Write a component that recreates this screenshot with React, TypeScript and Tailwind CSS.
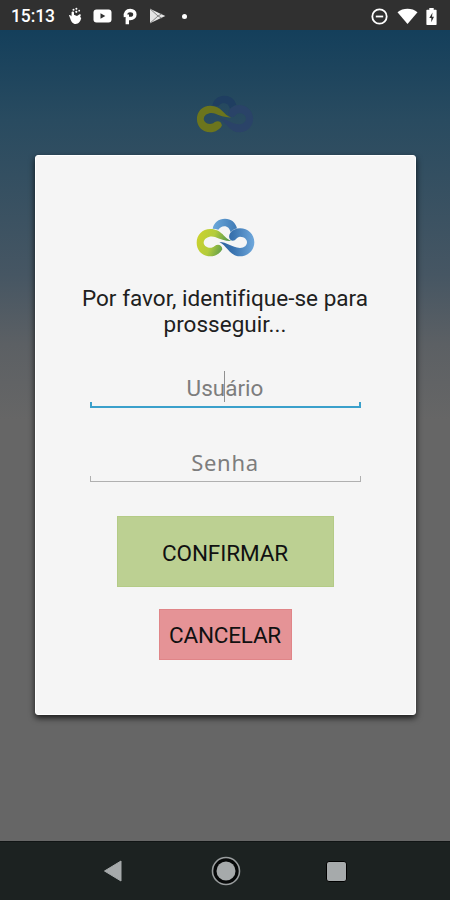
function CloudLogo({ className, dimmed }: { className?: string; dimmed?: boolean }) {
  const leaf = dimmed ? '#747a16' : 'url(#leaf)';
  const sky = dimmed ? '#2b4369' : 'url(#sky)';
  const arch = dimmed ? '#1f3d62' : 'url(#arch)';

  return (
    <svg className={className} viewBox="33 38 177 117" fill="none">
      <defs>
        <linearGradient id="leaf" x1="35" y1="70" x2="140" y2="110" gradientUnits="userSpaceOnUse">
          <stop offset="0" stopColor="#d0d32a" />
          <stop offset="0.5" stopColor="#b3cc3c" />
          <stop offset="1" stopColor="#3f8a52" />
        </linearGradient>
        <linearGradient id="sky" x1="103" y1="0" x2="208" y2="0" gradientUnits="userSpaceOnUse">
          <stop offset="0" stopColor="#2c5f9e" />
          <stop offset="0.4" stopColor="#3a74b0" />
          <stop offset="1" stopColor="#6fa8dc" />
        </linearGradient>
        <linearGradient id="arch" x1="84" y1="0" x2="156" y2="0" gradientUnits="userSpaceOnUse">
          <stop offset="0" stopColor="#6ba8da" />
          <stop offset="1" stopColor="#3f7ab5" />
        </linearGradient>
      </defs>
      <path d="M83 70C86 52 101 40 120 40c18 0 32 11 36 29-8 2-14 6-19 12-3-11-9-18-19-18-8 0-13 4-18 10-5-2-11-3-17-3z" fill={arch} />
      <path d="M103 110c22 0 37 16 62 18 28 0 28-34 0-34-10 0-12 12-22 12-11-1-14-14-7-24 7-8 17-13 29-13 24 0 43 18 43 42s-19 42-43 42c-30 0-39-32-62-43z" fill={sky} />
      <path d="M140 107C117 100 111 71 76 71c-24 0-41 18-41 41s17 41 41 41c16 0 30-9 36-21-1-13-13-17-23-10-8 9-30 7-33-9 0-17 21-23 34-18 16 6 32 13 50 12z" fill={leaf} />
    </svg>
  );
}

function StatusBar() {
  return (
    <header className="flex h-[30px] shrink-0 items-center bg-[#303030] pl-[11px] pr-[13px] pt-[2px] text-white">
      <span className="w-[57px] pt-px text-[17.5px] font-medium leading-none tracking-[-0.1px]">15:13</span>
      <svg className="h-[18px] w-[15px]" viewBox="0 0 15 18" fill="currentColor">
        <path d="M1 8.200c1-.8 1.800.2 2.700 1.400L4 7l5 2 2.200-1.500c1-.7 2 .2 1.400 1.200l-.5 1.200c1.300.4 1.300 1.400.8 2.200C12.400 14.500 10.800 17 7.600 17 4.700 17 3.200 14.500 2.400 12z" />
        <rect x="3.600" y="4.400" width="2.400" height="6" rx="1.200" />
        <circle cx="5.500" cy="2.800" r="1" />
        <circle cx="8.400" cy="1.700" r="1" />
        <circle cx="8.300" cy="4.800" r="1.100" />
        <circle cx="11.200" cy="3.700" r="0.9" />
      </svg>
      <svg className="ml-[10px] h-[14px] w-[19px]" viewBox="0 0 19 14">
        <rect x="0.5" y="0.5" width="18" height="13" rx="3" fill="currentColor" />
        <path d="M7.500 4.200v5.600L12.300 7z" fill="#303030" />
      </svg>
      <svg className="ml-[11px] h-[17px] w-[14px]" viewBox="0 0 14 17" fill="none" stroke="currentColor" strokeWidth="3.400">
        <path d="M4.300 16.200V6.500M2.400 9C1.800 4.500 4 2.500 7.200 2.500c3 0 4.700 1.600 4.700 3.900s-1.700 4.100-4.700 4.100H4.800" />
      </svg>
      <svg className="ml-[12px] h-[16px] w-[17px]" viewBox="0 0 17 16">
        <path d="M1 .8 16.300 8 1 15.200z" fill="#e4e4e4" />
        <path d="M1 .8 9 8l-8 7.200M9 8l3.500-2M9 8l3.500 2" fill="none" stroke="#777777" strokeWidth="0.9" />
      </svg>
      <span className="ml-[16px] h-[5px] w-[5px] rounded-full bg-white" />

      <svg className="ml-auto h-[17px] w-[17px]" viewBox="0 0 17 17" fill="none" stroke="currentColor" strokeWidth="1.800">
        <circle cx="8.500" cy="8.500" r="7.200" />
        <path d="M4.800 8.500h7.400" />
      </svg>
      <svg className="ml-[9px] h-[16px] w-[21px]" viewBox="0 0 21 16" fill="currentColor">
        <path d="M.5 4.200C6-.4 15-.4 20.500 4.200L10.500 16z" />
      </svg>
      <svg className="ml-[8px] h-[17px] w-[11px]" viewBox="0 0 11 17">
        <path d="M3.300 0h4.400v1.700H10q.6 0 .6.6v14q0 .7-.6.7H1q-.6 0-.6-.7v-14q0-.6.6-.6h2.300z" fill="currentColor" />
        <path d="M6.500 4.500 3.300 10h2v4.300L8 8.700H6z" fill="#303030" />
      </svg>
    </header>
  );
}

function NavBar() {
  return (
    <nav className="flex h-[59px] shrink-0 items-center justify-between border-t border-[#111515] bg-[#1c2221] pl-[103px] pr-[103px]">
      <svg className="h-[22px] w-[20px]" viewBox="0 0 20 22">
        <path d="M1.500 11 18 1v20z" fill="#a6aaab" stroke="#a6aaab" strokeLinejoin="round" />
      </svg>
      <svg className="ml-[2px] h-[30px] w-[30px]" viewBox="0 0 30 30">
        <circle cx="15" cy="15" r="13.500" fill="#070909" stroke="#999d9e" strokeWidth="1.600" />
        <circle cx="15" cy="15" r="9.500" fill="#a6aaab" />
      </svg>
      <span className="h-[21px] w-[21px] rounded-[3px] border border-black bg-[#a6aaab]" />
    </nav>
  );
}

function UnderlineField({ name, type, placeholder, active }: { name: string; type: string; placeholder: string; active?: boolean }) {
  return (
    <div className="relative w-[271px]">
      <input
        name={name}
        type={type}
        placeholder={placeholder}
        className={
          active
            ? 'block h-[36px] w-full bg-transparent pt-[8px] text-center text-[22.5px] outline-none placeholder:text-[#7d7d7d]'
            : 'block h-[36px] w-full bg-transparent pt-[7px] text-center font-["Noto_Sans",sans-serif] text-[22px] tracking-[0.7px] outline-none placeholder:text-[#7d7d7d]'
        }
      />
      {/* Line with raised ends */}
      <div className={active ? 'h-[6px] border-x-2 border-b-2 border-[#3aa0cb]' : 'h-[6px] border-x border-b-[1.5px] border-[#b0b0b0]'} />
      {active && <span className="absolute left-[134px] top-[5px] h-[31px] w-px bg-[#909090]" />}
    </div>
  );
}

export default function App() {
  return (
    <div className="flex h-[900px] w-[450px] flex-col overflow-hidden font-[Roboto,sans-serif]">
      <StatusBar />
      <main className="relative flex h-[811px] shrink-0 flex-col items-center bg-[linear-gradient(#143f5b_0px,#294b60_90px,#465663_245px,#5c6064_315px,#666666_390px)]">
        <div className="h-[125px] shrink-0 pt-[65px]">
          <CloudLogo className="h-[38px] w-[58px] opacity-90" dimmed />
        </div>

        {/* Login dialog */}
        <form className="flex h-[560px] w-[381px] shrink-0 flex-col items-center rounded-[3px] border border-white bg-[#f5f5f5] shadow-[0_3px_6px_0px_rgba(0,0,0,0.75)]">
          <CloudLogo className="mt-[62px] h-[39px] w-[59px]" />
          <p className="mt-[28px] text-center text-[22.5px] leading-[26px] tracking-[0.03px] text-[#202020]">
            Por favor, identifique-se para
            <br />
            prosseguir...
          </p>
          <div className="mt-[29px] flex flex-col gap-[32px]">
            <UnderlineField name="usuario" type="text" placeholder="Usuário" active />
            <UnderlineField name="senha" type="password" placeholder="Senha" />
          </div>
          <button type="button" className="mt-[34px] h-[71px] w-[217px] shrink-0 border border-[#b4cb86] bg-[#bcd092] pt-[4px] text-[22.5px] tracking-[-0.1px] text-[#111111]">
            CONFIRMAR
          </button>
          <button type="button" className="mt-[22px] h-[51px] w-[133px] shrink-0 border border-[#e08588] bg-[#e59396] pt-[3px] text-[22.5px] tracking-[-0.2px] text-[#111111]">
            CANCELAR
          </button>
        </form>
      </main>
      <NavBar />
    </div>
  );
}
